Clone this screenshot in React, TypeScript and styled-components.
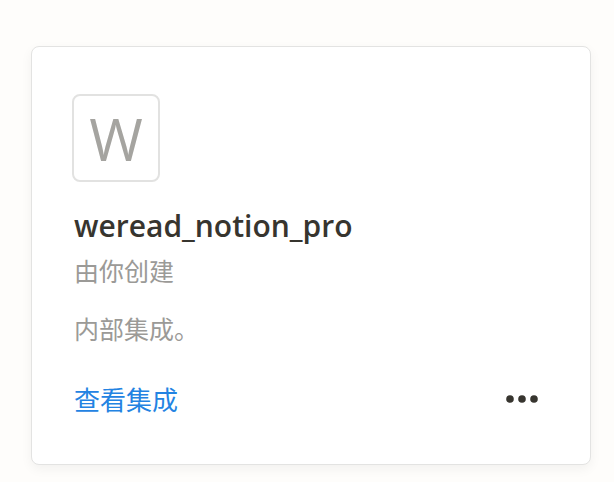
import React from "react";
import styled, { createGlobalStyle } from "styled-components";

const GlobalStyle = createGlobalStyle`
  * { box-sizing: border-box; }
  body {
    margin: 0;
    background: #fefdfb;
    font-family: "Open Sans", "Noto Sans CJK SC", sans-serif;
  }
`;

const Page = styled.main`
  padding: 46px 23px 16px 31px;
`;

const Card = styled.article`
  padding: 47px 41px 44px 40px;
  background: #fff;
  border: 1px solid #e3e3e2;
  border-radius: 8px;
  box-shadow: 0 4px 12px rgba(15, 15, 15, 0.05);
`;

const Logo = styled.div`
  display: flex;
  align-items: center;
  justify-content: center;
  width: 88px;
  height: 88px;
  padding-top: 2px;
  border: 2px solid #e2e2e1;
  border-radius: 8px;
  color: #a5a4a0;
  font-size: 58px;
  line-height: 80px;
`;

const Details = styled.div`
  padding: 24px 2px 0;
`;

const Title = styled.h2`
  margin: 0;
  color: #37352f;
  font-size: 30px;
  font-weight: 600;
  line-height: 40px;
`;

const Note = styled.p<{ $spaced?: boolean }>`
  margin: ${(p) => (p.$spaced ? "20px" : "6px")} 0 0;
  color: #9b9a97;
  font-size: 25px;
  line-height: 38px;
`;

const Footer = styled.footer`
  display: flex;
  align-items: center;
  justify-content: space-between;
  margin-top: 32px;
  padding: 0 9px 0 2px;
`;

const ViewLink = styled.a`
  color: #2383e2;
  font-size: 26px;
  line-height: 40px;
  text-decoration: none;
`;

const MoreButton = styled.button`
  display: flex;
  padding: 8px 0 10px;
  border: 0;
  background: none;
  color: #37352f;
  cursor: pointer;
`;

export default function App() {
  return (
    <>
      <GlobalStyle />
      <Page>
        <Card>
          <Logo>W</Logo>
          <Details>
            <Title>weread_notion_pro</Title>
            <Note>由你创建</Note>
            <Note $spaced>内部集成。</Note>
          </Details>
          <Footer>
            <ViewLink href="#integration">查看集成</ViewLink>
            <MoreButton type="button" aria-label="更多">
              <svg width="36" height="12" viewBox="0 0 36 12" fill="currentColor" aria-hidden="true">
                <circle cx="6" cy="6" r="3.8" />
                <circle cx="18" cy="6" r="3.8" />
                <circle cx="30" cy="6" r="3.8" />
              </svg>
            </MoreButton>
          </Footer>
        </Card>
      </Page>
    </>
  );
}
